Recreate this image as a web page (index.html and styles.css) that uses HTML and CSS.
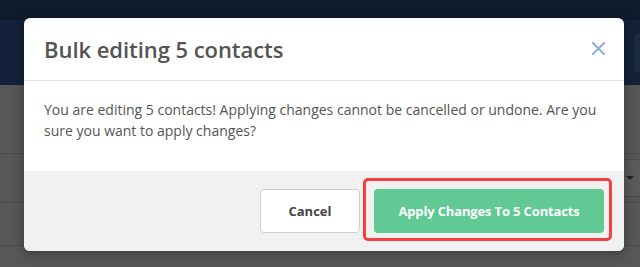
FILE: index.html
```html
<!DOCTYPE html>
<html>
<head>
<meta charset="utf-8">
<link rel="stylesheet" href="styles.css">
</head>
<body>
<div class="page">
  <div class="topbar">
    <div class="strip"></div>
    <div class="nav"><div class="nav-box"></div></div>
  </div>
  <div class="content">
    <div class="row row1"></div>
    <div class="row row2"><div class="select"><span class="caret"></span></div></div>
    <div class="row row3"></div>
    <div class="row row4"></div>
  </div>

  <div class="modal">
    <div class="modal-header">
      <h1 class="modal-title">Bulk editing 5 contacts</h1>
      <svg class="close" width="13" height="13" viewBox="0 0 13 13"><path d="M1 1 L12 12 M12 1 L1 12" stroke="#8fb0da" stroke-width="2" stroke-linecap="square"/></svg>
    </div>
    <div class="modal-body">
      You are editing 5 contacts! Applying changes cannot be cancelled or undone. Are you sure you want to apply changes?
    </div>
    <div class="modal-footer">
      <button class="btn btn-cancel">Cancel</button>
      <div class="highlight">
        <button class="btn btn-apply">Apply Changes To 5 Contacts</button>
      </div>
    </div>
  </div>
</div>
</body>
</html>
```
FILE: styles.css
```css
* { box-sizing: border-box; }
html, body { margin: 0; padding: 0; }
body {
  width: 640px;
  height: 267px;
  overflow: hidden;
  font-family: "Open Sans", "Liberation Sans", sans-serif;
  background: #575757;
}
.page { position: relative; width: 640px; height: 267px; }
.topbar { height: 85px; display: flex; flex-direction: column; }
.strip { height: 20px; background: #0f1a2b; }
.nav { flex: 1; background: #13223a; display: flex; justify-content: flex-end; align-items: center; }
.nav-box { width: 10px; height: 38px; margin-right: -4px; border-radius: 4px; background: #1b2c45; }
.content { display: flex; flex-direction: column; }
.row { border-bottom: 1px solid #4a4a4a; }
.row1 { height: 69px; }
.row2 { height: 49px; display: flex; justify-content: flex-end; align-items: center; }
.row3 { height: 43px; }
.row4 { height: 20px; border-bottom: none; }
.select { width: 20px; height: 38px; margin-right: -2px; border: 1px solid #4a4a4a; border-radius: 4px; background: #5a5a5a; position: relative; }
.caret { position: absolute; left: 3px; top: 16px; width: 0; height: 0; border-left: 4px solid transparent; border-right: 4px solid transparent; border-top: 4px solid #222; }

.modal {
  position: absolute;
  left: 24px;
  top: 18px;
  width: 600px;
  background: #fff;
  border-radius: 6px;
  box-shadow: 0 2px 12px rgba(0,0,0,0.35);
  overflow: hidden;
}
.modal-header {
  height: 63px;
  padding: 0 19px 0 20px;
  display: flex;
  align-items: center;
  justify-content: space-between;
  border-bottom: 1px solid #e3e3e3;
}
.modal-title {
  margin: 0;
  font-size: 22px;
  font-weight: 600;
  color: #545454;
  letter-spacing: -0.05px;
}
.close { display: block; margin-top: -2px; }
.modal-body {
  padding: 18px 20px 30px;
  font-size: 14px;
  line-height: 21px;
  color: #555;
}
.modal-footer {
  background: #f1f1f1;
  padding: 18px 20px 18px;
  display: flex;
  justify-content: flex-end;
  gap: 14px;
}
.btn {
  height: 44px;
  border-radius: 4px;
  font-family: "Open Sans", "Liberation Sans", sans-serif;
  font-size: 13px;
  font-weight: 700;
  cursor: pointer;
}
.btn-cancel {
  width: 100px;
  background: #fff;
  border: 1px solid #cfcfcf;
  color: #444;
}
.highlight { position: relative; }
.highlight::after {
  content: "";
  position: absolute;
  left: -11px;
  top: -11px;
  right: -8px;
  bottom: -8px;
  border: 3px solid #f6403d;
  border-radius: 5px;
  pointer-events: none;
}
.btn-apply {
  display: block;
  width: 230px;
  background: #60c994;
  border: none;
  color: #fff;
  letter-spacing: -0.15px;
}
```
